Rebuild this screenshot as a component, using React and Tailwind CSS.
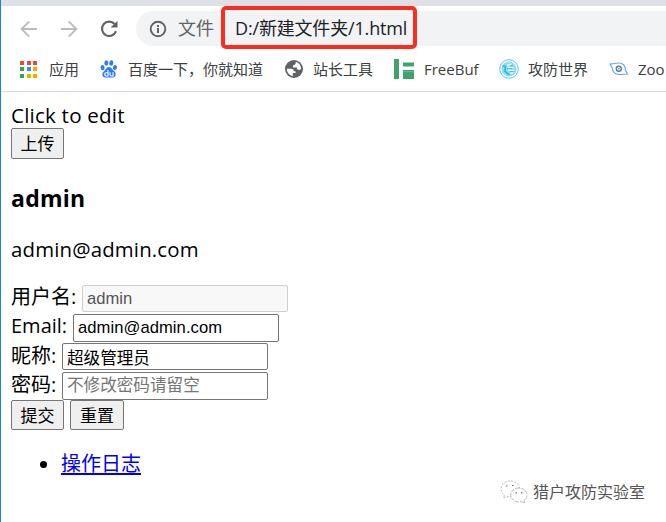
import React from 'react';

const BackArrow = ({ flip }) => (
  <svg viewBox="0 0 18 18" className={flip ? 'size-[18px] rotate-180' : 'size-[18px]'} fill="none" stroke="#babcbe" strokeWidth="1.9">
    <path d="M17 9H2M9.3 1.3 1.6 9l7.7 7.7" />
  </svg>
);

const Reload = () => (
  <svg viewBox="0 0 18 18" className="size-[18px]">
    <path d="M14.6 4A7.2 7.2 0 1 0 16 11.2" fill="none" stroke="#5f6368" strokeWidth="2.1" />
    <path d="M17.5 0.7V7.6H10.6Z" fill="#5f6368" />
  </svg>
);

const Info = () => (
  <svg viewBox="0 0 18 18" className="size-[18px]">
    <circle cx="9" cy="9" r="7.3" fill="none" stroke="#5f6368" strokeWidth="1.9" />
    <path d="M8 8h2v5H8zM8 4.900h2v2H8z" fill="#5f6368" />
  </svg>
);

const dots = ['bg-[#f44336]', 'bg-[#f44336]', 'bg-[#f44336]', 'bg-[#34a35a]', 'bg-[#2196f3]', 'bg-[#fbab00]', 'bg-[#34a35a]', 'bg-[#fbab00]', 'bg-[#fbab00]'];

const Apps = () => (
  <div className="grid grid-cols-[4px_4px_4px] grid-rows-[4px_4px_4px] gap-[2.500px] w-[17px] h-[17px]">
    {dots.map((c, i) => <span key={i} className={c} />)}
  </div>
);

const Baidu = () => (
  <svg viewBox="0 0 18 18" className="size-[18px]" fill="#2f7df6">
    <ellipse cx="2.6" cy="7.6" rx="2" ry="2.6" transform="rotate(-12 2.6 7.6)" />
    <ellipse cx="6.3" cy="3" rx="2" ry="2.7" />
    <ellipse cx="11.3" cy="3" rx="2" ry="2.7" transform="rotate(12 11.3 3)" />
    <ellipse cx="15" cy="7.5" rx="2" ry="2.5" transform="rotate(12 15 7.5)" />
    <path d="M9 7.1c2 0 2.8 1.8 4.2 3.1 1.6 1.4 3.1 2.8 2.3 5.2-.7 2.4-3 2.2-6.5 2.2s-5.8.2-6.5-2.2c-.7-2.4.9-3.8 2.4-5.2C6.300 8.900 7 7.100 9 7.100Z" />
    <path d="M8 10v6H6.300a1.600 1.600 0 0 1 0-3.300H8M10 12.300v2.500q0 1.200 1.200 1.200H13v-3.700" fill="none" stroke="#fff" strokeWidth="1.1" />
  </svg>
);

const Globe = () => (
  <svg viewBox="0 0 18 18" className="size-[18px]">
    <circle cx="9" cy="9" r="9" fill="#5f6368" />
    <path d="M1.900 8.800H6C7.800 8.800 8.800 9.600 8.800 11.200H10.500V13H7.800V16C4.200 15.400 1.900 12.600 1.900 8.800ZM10.800 2.100C13.800 2.800 16 5.400 16.100 8.800C15.600 10 14.300 10 13.200 9.800C11.900 9.500 11.900 8.500 11.900 7.500H8V5.200C9.800 5.200 10.800 4.300 10.800 2.100Z" fill="#fff" />
  </svg>
);

const FreeBuf = () => (
  <svg viewBox="0 0 20 20" className="size-[20px]" fill="#3fa268">
    <path d="M0 0h5v20H0zM9 3.500h11v4H9zM9 11h11v9H9z" />
    <path d="M9 12.700h11" stroke="#8ac7a2" strokeWidth=".7" />
  </svg>
);

const World = () => (
  <svg viewBox="0 0 20 20" className="size-[20px]" fill="none" stroke="#4cc8ee">
    <circle cx="10" cy="10" r="9.300" strokeWidth="1" />
    <circle cx="10" cy="10" r="7.500" fill="#8edcf4" stroke="none" />
    <path d="M8 6.500 12.500 5M8.500 8.500h6M9 11l6 .5M10 14.500l4-1" stroke="#fff" strokeWidth="1.300" />
    <path d="M3.500 7 6.500 7.500 6 12 8.500 14.500 11 15.500" stroke="#22b5e6" strokeWidth="1.600" />
    <path d="M8 9.700h5.500M11 7l3-.5M10.500 13l4-.5" stroke="#22b5e6" strokeWidth=".9" />
  </svg>
);

const Eye = () => (
  <svg viewBox="0 0 20 14" className="w-[20px] h-[14px]" fill="none" stroke="#76a9db" strokeWidth="1.200">
    <path d="M1 2C5 2 6 1 10 1c4.200 0 6.500 3 6.300 7L18.500 12C14 12 13 12.500 10 12.500 5.800 12.500 3.300 9.500 3.300 6Z" />
    <circle cx="9.800" cy="6.800" r="2.500" stroke="#4a7fbd" strokeWidth="1.400" />
    <circle cx="9.800" cy="6.800" r=".8" fill="#4a7fbd" stroke="none" />
  </svg>
);

const WeChat = () => (
  <svg viewBox="0 0 28 24" className="w-[28px] h-[24px] shrink-0" fill="#fff" stroke="#aaa" strokeWidth=".8">
    <path d="M10 1C4.500 1 1 4.500 1 9c0 2.700 1.400 4.700 3.500 6L3.500 18.500 7 16.500c1 .3 2 .4 3 .4 5.500 0 9.500-3.500 9.500-8S15.500 1 10 1Z" strokeDasharray="2 1.500" />
    <path d="M19 8c-4.700 0-8.300 3-8.300 7s3.600 7 8.300 7c1 0 2-.1 2.800-.4l3 1.500-.8-2.600c2-1.300 3-3.200 3-5.500 0-4-3.400-7-8-7Z" strokeDasharray="4 1" />
    <path d="M6 6h1.500M12 5.500h1.500M15.500 12.800h1.500M21 12.800h1.500" stroke="#666" strokeWidth="1.200" />
  </svg>
);

const btn = "border border-[#767676] rounded-[2px] bg-[#efefef] text-[17px] text-black text-center whitespace-nowrap";
const field = "w-[206px] border rounded-[2px] px-[4px] text-[16.600px] outline-none font-['Liberation_Sans','Noto_Sans_CJK_SC',sans-serif]";

export default function App() {
  return (
    <div className="w-[666px] h-[522px] overflow-hidden bg-white border-l border-[#1a82d8] text-black font-['Open_Sans','Noto_Sans_CJK_SC',sans-serif] whitespace-nowrap">
      <div className="h-[6px] bg-[#dee1e6]" />
      <header className="h-[86px] border-b border-[#d8dadd]">
        <div className="h-[45px] pt-[5px] flex">
          <div className="flex items-center w-[135px] h-[35px] pl-[19px] gap-[22px] shrink-0">
            <BackArrow />
            <BackArrow flip />
            <Reload />
          </div>
          <div className="relative flex items-center flex-1 h-[35px] bg-[#f1f3f4] rounded-l-full pl-[13px]">
            <Info />
            <span className="ml-[11px] w-[57px] text-[18px] text-[#5f6368]">文件</span>
            <span className="text-[18px] text-[#202124] tracking-[-0.170px]">D:/新建文件夹/1.html</span>
            <div className="absolute left-[85px] -top-[5px] w-[196px] h-[43px] rounded-[5px] border-4 border-[#fc2d1c]" />
          </div>
        </div>
        <nav className="flex items-center h-[36px] text-[15px] text-[#3c4043] overflow-hidden">
          <div className="flex items-center w-[79px] pl-[19px] gap-[12px] shrink-0"><Apps /><span>应用</span></div>
          <div className="flex items-center w-[185px] pl-[20px] gap-[10px] shrink-0"><Baidu /><span>百度一下，你就知道</span></div>
          <div className="flex items-center w-[109px] pl-[20px] gap-[10px] shrink-0"><Globe /><span>站长工具</span></div>
          <div className="flex items-center w-[105px] pl-[20px] gap-[10px] shrink-0"><FreeBuf /><span>FreeBuf</span></div>
          <div className="flex items-center w-[110px] pl-[20px] gap-[9px] shrink-0"><World /><span>攻防世界</span></div>
          <div className="flex items-center pl-[20px] gap-[9px] shrink-0"><Eye /><span className="tracking-[-0.100px]">Zoo</span></div>
        </nav>
      </header>
      <main className="pl-[10px] pt-[9px] text-[20px]">
        <div className="h-[27px] leading-[28px] text-[20.600px] tracking-[0.200px]">Click to edit</div>
        <button className={`${btn} h-[31px] leading-[29px] w-[53px] block`}>上传</button>
        <h3 className="mt-[25px] mb-[24px] h-[28px] leading-[28px] font-bold text-[23px] tracking-[0.250px]">admin</h3>
        <p className="h-[28px] leading-[26px] text-[20.400px] tracking-[0.170px]">admin@admin.com</p>
        <form className="mt-[21px]">
          <div className="flex h-[29px]">
            <label className="w-[71px] leading-[24px]">用户名:</label>
            <input className={`${field} h-[27px] border-[#cfcfcf] bg-[#f8f8f8] text-[#545454]`} disabled defaultValue="admin" />
          </div>
          <div className="flex h-[29px]">
            <label className="w-[62px] leading-[24px]">Email:</label>
            <input className={`${field} h-[28px] border-[#767676] tracking-[0.060px]`} defaultValue="admin@admin.com" />
          </div>
          <div className="flex h-[29px]">
            <label className="w-[51px] leading-[26px]">昵称:</label>
            <input className={`${field} h-[27px] border-[#767676]`} defaultValue="超级管理员" />
          </div>
          <div className="flex h-[28px]">
            <label className="w-[51px] leading-[26px]">密码:</label>
            <input className={`${field} h-[28px] border-[#767676] placeholder:text-[#757575]`} placeholder="不修改密码请留空" />
          </div>
          <div className="flex gap-[6px]">
            <button type="button" className={`${btn} h-[30px] leading-[29px] w-[53px]`}>提交</button>
            <button type="button" className={`${btn} h-[30px] leading-[29px] w-[54px]`}>重置</button>
          </div>
        </form>
        <div className="flex justify-between">
          <ul className="mt-[20px] flex items-center h-[28px]">
            <li className="flex items-center pl-[29px] gap-[14px]">
              <span className="size-[7px] rounded-full bg-black" />
              <a className="leading-[28px] text-[#0000ee] underline decoration-2 underline-offset-2">操作日志</a>
            </li>
          </ul>
          <div className="mt-[49px] mr-[21px] flex items-center h-[26px] gap-[5px]">
            <WeChat />
            <span className="text-[16px] text-[#555] [text-shadow:-1px_-1px_0_#fff]">猎户攻防实验室</span>
          </div>
        </div>
      </main>
    </div>
  );
}
